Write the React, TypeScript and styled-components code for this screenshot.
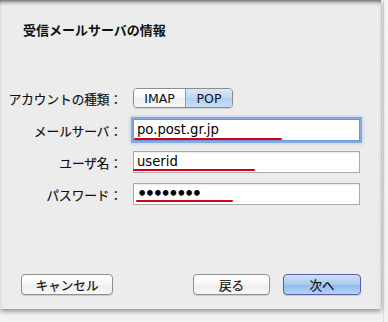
import React from 'react';
import styled, { createGlobalStyle } from 'styled-components';

const GlobalStyle = createGlobalStyle`
  html, body {
    margin: 0;
    padding: 0;
    background: #f5f5f5;
  }
  body {
    width: 388px;
    height: 322px;
    overflow: hidden;
    font-family: "DejaVu Sans", "Noto Sans CJK JP", sans-serif;
  }
`;

const FONT = `"DejaVu Sans", "Noto Sans CJK JP", sans-serif`;

export default function App() {
  return (
    <>
      <GlobalStyle />
      <Desk>
        <Sheet>
          <Title>受信メールサーバの情報</Title>
          <Form>
            <Label>アカウントの種類：</Label>
            <Field>
              <Segmented>
                <Segment>IMAP</Segment>
                <Segment selected>POP</Segment>
              </Segmented>
            </Field>

            <Label>メールサーバ：</Label>
            <Field>
              <TextBox focused>
                <BoxText>po.post.gr.jp</BoxText>
                <Marker left={0} width={148} top={18} />
              </TextBox>
            </Field>

            <Label>ユーザ名：</Label>
            <Field>
              <TextBox>
                <BoxText>userid</BoxText>
                <Marker left={-1} width={122} top={17} />
              </TextBox>
            </Field>

            <Label>パスワード：</Label>
            <Field>
              <TextBox>
                <Dots>••••••••</Dots>
                <Marker left={2} width={97} top={16} />
              </TextBox>
            </Field>
          </Form>
          <Footer>
            <Button width={92}>キャンセル</Button>
            <Spacer />
            <Button width={77}>戻る</Button>
            <Button width={78} primary>次へ</Button>
          </Footer>
        </Sheet>
        <SideStrip />
      </Desk>
    </>
  );
}

const Desk = styled.div`
  display: flex;
  width: 388px;
  height: 322px;
  background: linear-gradient(#f6f6f6, #f2f2f2);
`;

const Sheet = styled.div`
  position: relative;
  display: flex;
  flex-direction: column;
  width: 381px;
  height: 309px;
  box-sizing: border-box;
  background: #ececec;
  box-shadow: 0 2px 5px rgba(0, 0, 0, 0.45), inset 0 4px 5px -3px rgba(0, 0, 0, 0.75);
  padding: 22px 20px 14px 0;
`;

const SideStrip = styled.div`
  flex: 1;
  border-left: 1px solid #dcdcdc;
  margin-left: 2px;
`;

const Title = styled.div`
  margin-left: 23px;
  font-family: "Noto Sans CJK JP", sans-serif;
  font-weight: 700;
  font-size: 13px;
  line-height: 16px;
  color: #111;
`;

const Form = styled.div`
  display: grid;
  grid-template-columns: 114px 228px;
  grid-auto-rows: 22px;
  column-gap: 11px;
  row-gap: 10px;
  margin-top: 49px;
  padding-left: 8px;
`;

const Label = styled.div`
  display: flex;
  align-items: center;
  justify-content: flex-end;
  font-family: "Noto Sans CJK JP", sans-serif;
  font-size: 12.6px;
  color: #111;
  white-space: nowrap;
  -webkit-text-stroke: 0.2px #111;
`;

const Field = styled.div`
  display: flex;
  align-items: center;
`;

const Segmented = styled.div`
  display: flex;
  height: 20px;
  box-sizing: border-box;
  border: 1px solid #8c8c8c;
  border-radius: 4px;
  overflow: hidden;
  box-shadow: 0 1px 1px rgba(0, 0, 0, 0.12);
`;

const Segment = styled.div<{ selected?: boolean }>`
  display: flex;
  align-items: center;
  justify-content: center;
  width: ${(p) => (p.selected ? '46px' : '51px')};
  font-family: ${FONT};
  font-size: 12.5px;
  color: #111;
  background: ${(p) =>
    p.selected
      ? 'linear-gradient(#d9e7f9, #c0d6f3 50%, #b3cef1 51%, #c6dcf6)'
      : 'linear-gradient(#ffffff, #f7f7f7 50%, #eeeeee 51%, #f6f6f6)'};
  & + & {
    border-left: 1px solid #9a9a9a;
  }
`;

const TextBox = styled.div<{ focused?: boolean }>`
  position: relative;
  display: flex;
  align-items: center;
  width: 227px;
  height: 22px;
  box-sizing: border-box;
  padding-left: 3px;
  background: #fff;
  border: 1px solid ${(p) => (p.focused ? '#6d97d3' : '#a9a9a9')};
  box-shadow: ${(p) =>
    p.focused ? '0 0 0 2px rgba(110, 155, 220, 0.75), 0 0 3px 3px rgba(120, 165, 225, 0.35)' : 'inset 0 1px 1px rgba(0,0,0,0.08)'};
`;

const BoxText = styled.span`
  font-family: ${FONT};
  font-size: 13.2px;
  color: #000;
  line-height: 16px;
`;

const Dots = styled.span`
  font-family: ${FONT};
  font-size: 16px;
  font-weight: 700;
  letter-spacing: -2.4px;
  color: #000;
  line-height: 16px;
`;

const Marker = styled.div<{ left: number; width: number; top: number }>`
  position: absolute;
  left: ${(p) => p.left}px;
  top: ${(p) => p.top}px;
  width: ${(p) => p.width}px;
  height: 2px;
  background: #d0021b;
  border-radius: 1px;
`;

const Footer = styled.div`
  display: flex;
  align-items: center;
  gap: 13px;
  margin-top: auto;
  padding-left: 21px;
`;

const Spacer = styled.div`
  flex: 1;
`;

const Button = styled.div<{ width: number; primary?: boolean }>`
  display: flex;
  align-items: center;
  justify-content: center;
  width: ${(p) => p.width}px;
  height: 21px;
  box-sizing: border-box;
  border-radius: 4px;
  font-family: "Noto Sans CJK JP", sans-serif;
  font-size: 12.6px;
  color: #111;
  -webkit-text-stroke: 0.2px #111;
  border: 1px solid ${(p) => (p.primary ? '#5b5fa6' : '#8f8f8f')};
  background: ${(p) =>
    p.primary
      ? 'linear-gradient(#cde0f8, #a9c9f1 50%, #8fb8ec 51%, #b5d3f6)'
      : 'linear-gradient(#ffffff, #f6f6f6 50%, #ededed 51%, #f7f7f7)'};
  box-shadow: 0 1px 1px rgba(0, 0, 0, 0.15);
`;
